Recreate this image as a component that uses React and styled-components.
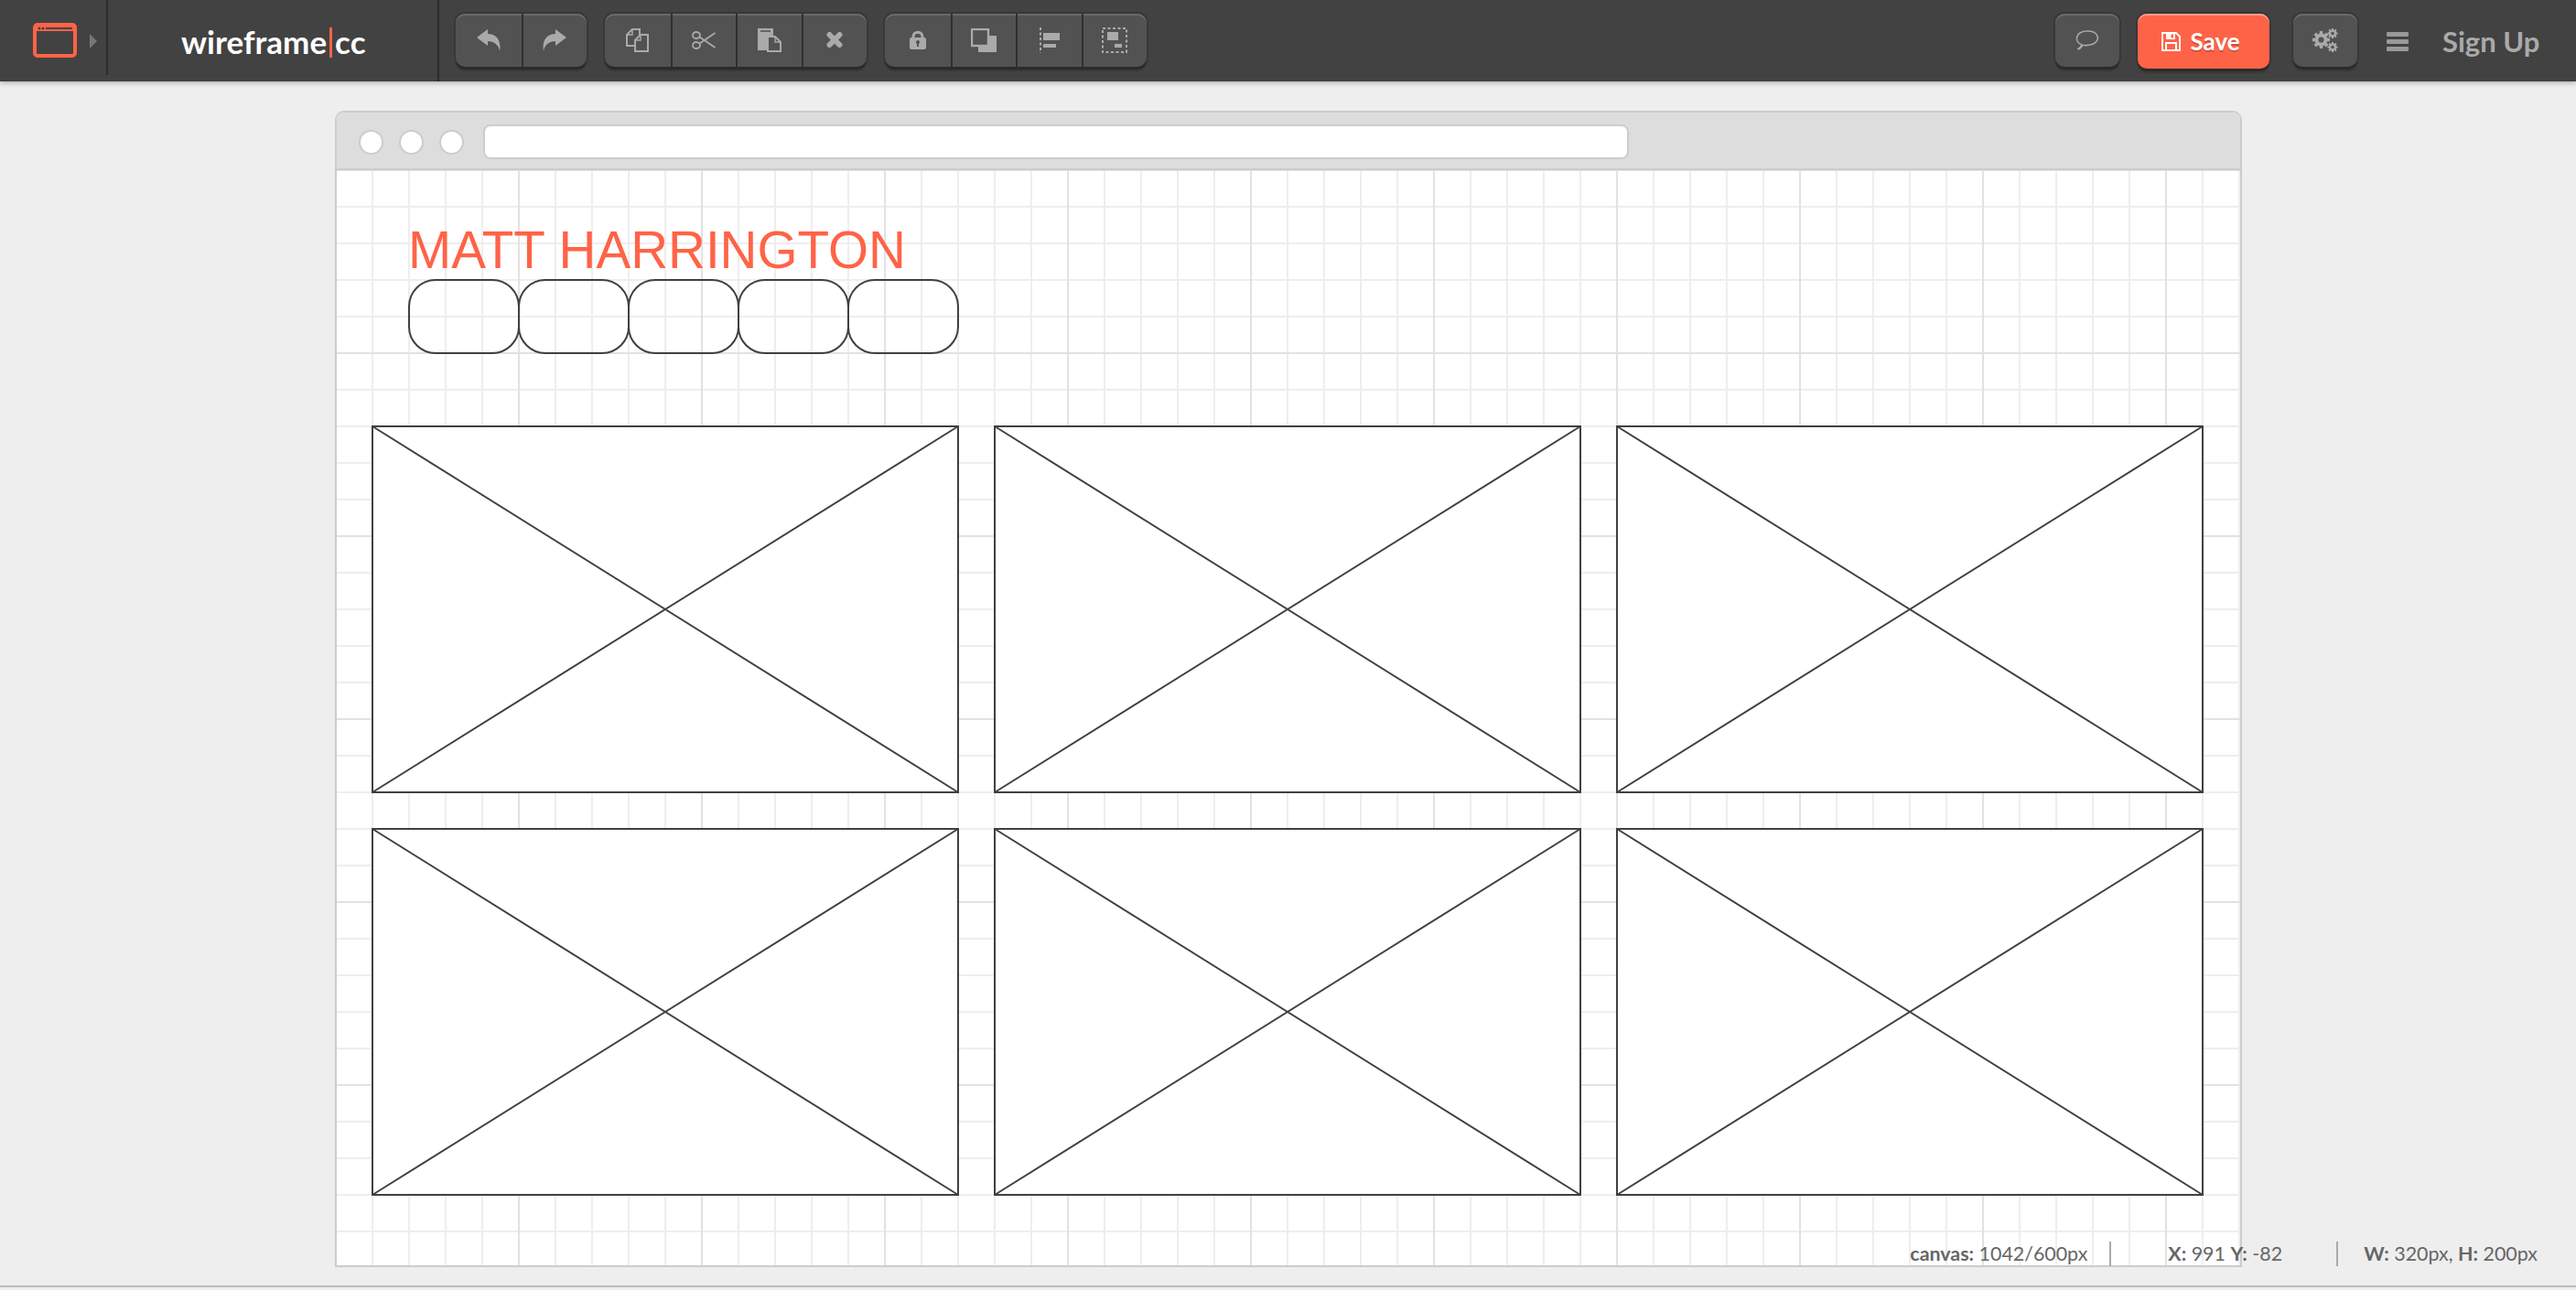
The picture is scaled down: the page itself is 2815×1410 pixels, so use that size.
import React from 'react';
import styled, { createGlobalStyle } from 'styled-components';

const ACCENT = '#ff6347';
const ICON = '#aaaaaa';
const BTN = '#525252';
const LINE = '#404040';

const GlobalStyle = createGlobalStyle`
  html, body {
    margin: 0;
    padding: 0;
    background: #eeeeee;
    font-family: Lato, "Open Sans", sans-serif;
    overflow: hidden;
  }
`;

const Page = styled.div`
  position: relative;
  width: 2815px;
  height: 1410px;
  display: flex;
  flex-direction: column;
`;

const TopBar = styled.header`
  height: 89px;
  flex: none;
  display: flex;
  align-items: stretch;
  background: #424242;
  box-shadow: 0 2px 5px rgba(0, 0, 0, 0.25);
  z-index: 2;
`;

const LogoCell = styled.div`
  width: 118px;
  height: 82px;
  box-sizing: border-box;
  border-right: 2px solid #2b2b2b;
  padding: 25px 0 0 36px;
  display: flex;
  gap: 14px;
`;

const Arrow = styled.span`
  width: 0;
  height: 0;
  margin-top: 12px;
  border-left: 8px solid #777;
  border-top: 8px solid transparent;
  border-bottom: 8px solid transparent;
`;

const BrandCell = styled.div`
  width: 362px;
  box-sizing: border-box;
  border-right: 2px solid #2b2b2b;
  padding-left: 80px;
  display: flex;
  align-items: center;
  color: #fff;
  font-size: 35px;
  font-weight: 700;
`;

const BrandBar = styled.span`
  width: 3px;
  height: 33px;
  margin: 3px 3px 0 3px;
  background: ${ACCENT};
`;

const Tools = styled.div`
  flex: 1;
  display: flex;
  align-items: flex-start;
  padding: 15px 0 0 18px;
  gap: 20px;
`;

const Group = styled.div`
  display: flex;
  height: 58px;
  border-radius: 10px;
  background: ${BTN};
  box-shadow: inset 0 2px 0 #6a6a6a, 0 3px 0 #2b2b2b, 0 0 0 2px #383838, 0 5px 0 #383838;
`;

const ToolButton = styled.div`
  width: 71.5px;
  padding-bottom: 1px;
  display: flex;
  align-items: center;
  justify-content: center;
  box-sizing: border-box;
  & + & {
    border-left: 2px solid #2f2f2f;
  }
`;

const RightSide = styled.div`
  display: flex;
  align-items: flex-start;
  padding: 15px 40px 0 0;
`;

const SingleButton = styled(Group)`
  width: 70px;
  align-items: center;
  justify-content: center;
  margin-right: ${(p) => p.$after}px;
`;

const SaveButton = styled.div`
  width: 144px;
  height: 60px;
  margin-right: 26px;
  padding-right: 6px;
  box-sizing: border-box;
  border-radius: 10px;
  background: ${ACCENT};
  box-shadow: inset 0 2px 0 #ff9c88, 0 3px 0 #2b2b2b, 0 0 0 2px #383838, 0 5px 0 #383838;
  display: flex;
  align-items: center;
  justify-content: center;
  gap: 10px;
  color: #fff;
  font-size: 26px;
  font-weight: 700;
  text-shadow: 0 2px 0 rgba(0, 0, 0, 0.2);
`;

const Burger = styled.div`
  width: 24px;
  margin: 20px 37px 0 32px;
  display: flex;
  flex-direction: column;
  gap: 3px;
  span {
    height: 5px;
    background: #999;
    border-radius: 1px;
  }
`;

const SignUp = styled.div`
  color: ${ICON};
  font-size: 31px;
  font-weight: 700;
  line-height: 60px;
  width: 106px;
  white-space: nowrap;
`;

const Workspace = styled.main`
  flex: 1;
  display: flex;
  justify-content: flex-start;
  padding: 32px 0 0 366px;
  box-sizing: border-box;
`;

const Browser = styled.div`
  width: 2084px;
  height: 1264px;
  box-sizing: border-box;
  border: 2px solid #cccccc;
  border-radius: 10px 10px 0 0;
  background: #fff;
  display: flex;
  flex-direction: column;
  overflow: hidden;
`;

const BrowserBar = styled.div`
  height: 63px;
  flex: none;
  box-sizing: border-box;
  background: #dddddd;
  border-bottom: 2px solid #cccccc;
  display: flex;
  align-items: center;
  padding: 3px 0 0 24px;
`;

const Dot = styled.span`
  width: 27px;
  height: 27px;
  margin-right: 17px;
  box-sizing: border-box;
  border-radius: 50%;
  background: #fff;
  border: 2px solid #cccccc;
`;

const UrlBar = styled.span`
  width: 1252px;
  height: 38px;
  margin-left: 4px;
  box-sizing: border-box;
  border-radius: 8px;
  background: #fff;
  border: 2px solid #cccccc;
`;

const Canvas = styled.div`
  flex: 1;
  box-sizing: border-box;
  padding: 60px 0 0 38px;
  background-color: #fff;
  background-image:
    linear-gradient(to right, #e2e2e2 2px, transparent 2px),
    linear-gradient(to bottom, #e2e2e2 2px, transparent 2px),
    linear-gradient(to right, #eeeeee 2px, transparent 2px),
    linear-gradient(to bottom, #eeeeee 2px, transparent 2px);
  background-size: 200px 200px, 200px 200px, 40px 40px, 40px 40px;
  background-position: 198px 0, 0 199px, 38px 0, 0 39px;
`;

const Title = styled.div`
  margin-left: 40px;
  height: 59px;
  color: ${ACCENT};
  font-family: "Liberation Sans", Arial, sans-serif;
  font-size: 56.6px;
  line-height: 55px;
  white-space: nowrap;
`;

const TabRow = styled.div`
  display: flex;
  margin: 0 0 78px 40px;
`;

const Tab = styled.div`
  width: 122px;
  height: 82px;
  margin-right: -2px;
  box-sizing: border-box;
  border: 2px solid ${LINE};
  border-radius: 30px;
`;

const ImageGrid = styled.div`
  display: grid;
  grid-template-columns: repeat(3, 642px);
  grid-auto-rows: 402px;
  column-gap: 38px;
  row-gap: 38px;
`;

const Placeholder = styled.svg`
  display: block;
  width: 642px;
  height: 402px;
  background: #fff;
`;

const Status = styled.div`
  position: absolute;
  right: 42px;
  top: 1357px;
  height: 27px;
  display: flex;
  align-items: center;
  color: #666666;
  font-size: 21.4px;
  white-space: nowrap;
  b {
    font-weight: 700;
  }
`;

const StatusItem = styled.span`
  padding-left: ${(p) => p.$left || 0}px;
  padding-right: ${(p) => p.$right || 0}px;
  line-height: 27px;
  & + & {
    border-left: 2px solid #aaaaaa;
  }
`;

const FootLine = styled.div`
  position: absolute;
  left: 0;
  right: 0;
  top: 1405px;
  height: 2px;
  background: #bbbbbb;
`;

const Icon = ({ w = 32, h = 32, children }) => (
  <svg width={w} height={h} viewBox={`0 0 ${w} ${h}`} fill="none">
    {children}
  </svg>
);

const Gear = ({ x, y, r, hole }) => {
  const teeth = [0, 45, 90, 135];
  return (
    <g transform={`translate(${x} ${y})`} fill={ICON}>
      {teeth.map((a) => (
        <rect key={a} x={-r * 0.26} y={-r * 1.38} width={r * 0.52} height={r * 2.76} transform={`rotate(${a})`} />
      ))}
      <circle r={r} />
      <circle r={hole} fill={BTN} />
    </g>
  );
};

const Doc = ({ x, y, w, h }) => (
  <g stroke={ICON} strokeWidth="2" fill={BTN}>
    <path d={`M${x + 1} ${y + h - 1} V${y + 7} L${x + 7} ${y + 1} H${x + w - 1} V${y + h - 1} Z`} />
    <path d={`M${x + 1} ${y + 7} H${x + 7} V${y + 1}`} fill="none" strokeWidth="1.4" />
  </g>
);

const icons = {
  undo: (
    <Icon w={26} h={24}>
      <path d="M0 9 L12 0 V5 C22 5 27 13 25 24 C24 17 19 13 12 13 V18 Z" fill={ICON} />
    </Icon>
  ),
  redo: (
    <Icon w={26} h={24}>
      <path d="M26 9 L14 0 V5 C4 5 -1 13 1 24 C2 17 7 13 14 13 V18 Z" fill={ICON} />
    </Icon>
  ),
  copy: (
    <Icon w={25} h={26}>
      <Doc x={0} y={0} w={16} h={20} />
      <Doc x={9} y={6} w={16} h={20} />
    </Icon>
  ),
  cut: (
    <Icon w={26} h={20}>
      <g stroke={ICON} strokeWidth="1.8">
        <ellipse cx="5" cy="4.5" rx="4" ry="3.5" />
        <ellipse cx="5" cy="15.5" rx="4" ry="3.5" />
        <path d="M8.5 6.5 L25.5 18 L13 9.5 M8.5 13.5 L25.5 2 L13 10.5" />
      </g>
    </Icon>
  ),
  paste: (
    <Icon w={26} h={26}>
      <path d="M0 0 H17 V8 H10 V24 H0 Z" fill={ICON} />
      <path d="M3 3 H14" stroke={BTN} strokeWidth="1.6" />
      <path d="M11 9 H19 L25 15 V25 H11 Z" fill={BTN} stroke={ICON} strokeWidth="2" />
      <path d="M19 9 V15 H25" stroke={ICON} strokeWidth="1.4" />
    </Icon>
  ),
  close: (
    <Icon w={18} h={17}>
      <path d="M3.5 3 L14.5 14 M14.5 3 L3.5 14" stroke={ICON} strokeWidth="6" strokeLinecap="round" />
    </Icon>
  ),
  lock: (
    <Icon w={18} h={21}>
      <path d="M4 9 V7 C4 0.5 14 0.5 14 7 V9" stroke={ICON} strokeWidth="3" />
      <rect x="0" y="8" width="18" height="13" rx="2" fill={ICON} />
      <circle cx="9" cy="13" r="2" fill={BTN} />
      <path d="M9 13 V18" stroke={BTN} strokeWidth="2" />
    </Icon>
  ),
  layer: (
    <Icon w={28} h={26}>
      <rect x="8" y="8" width="20" height="18" fill={ICON} />
      <rect x="1" y="1" width="18" height="18" fill={BTN} stroke={ICON} strokeWidth="2.4" />
    </Icon>
  ),
  align: (
    <Icon w={22} h={28}>
      <path d="M1 0 V28" stroke={ICON} strokeWidth="2" strokeDasharray="3 2.5" />
      <rect x="4" y="6" width="18" height="8" fill={ICON} />
      <rect x="4" y="18" width="14" height="4" fill={ICON} />
    </Icon>
  ),
  group: (
    <Icon w={28} h={28}>
      <rect x="1" y="1" width="26" height="26" stroke={ICON} strokeWidth="2" strokeDasharray="3 2.5" />
      <rect x="6" y="5" width="12" height="9" fill={ICON} />
      <rect x="14" y="18" width="8" height="4" fill={ICON} />
    </Icon>
  ),
  comment: (
    <Icon w={26} h={22}>
      <path
        d="M7 16 C-2 12.5 0 1 13 1 C26 1 28 12 18 15.5 C14.5 16.7 10.5 16.8 7.5 16.2 C7 18 5.5 20 2.5 21 C4.5 19.5 6.5 18 7 16 Z"
        stroke={ICON}
        strokeWidth="1.6"
      />
    </Icon>
  ),
  gears: (
    <Icon w={28} h={26}>
      <Gear x={9.5} y={12.5} r={6.9} hole={3.1} />
      <Gear x={22} y={5.5} r={4} hole={1.8} />
      <Gear x={22} y={20.5} r={4} hole={1.8} />
    </Icon>
  ),
};

const Floppy = () => (
  <Icon w={21} h={21}>
    <path d="M1 1 H16 L20 5 V20 H1 Z" stroke="#fff" strokeWidth="2" />
    <path d="M5 1 H15 V8 H5 Z" fill="#fff" />
    <rect x="10.5" y="2.5" width="2.5" height="4" fill={ACCENT} />
    <rect x="5" y="12" width="11" height="8" stroke="#fff" strokeWidth="2" />
  </Icon>
);

const LogoIcon = () => (
  <Icon w={48} h={38}>
    <rect x="2" y="2" width="44" height="34" rx="3" stroke={ACCENT} strokeWidth="4" />
    <rect x="2" y="2" width="44" height="7" fill={ACCENT} />
    <circle cx="7" cy="6" r="1.5" fill="#424242" />
    <circle cx="11" cy="6" r="1.5" fill="#424242" />
    <rect x="14" y="5" width="29" height="2" fill="#424242" />
  </Icon>
);

const groups = [
  ['undo', 'redo'],
  ['copy', 'cut', 'paste', 'close'],
  ['lock', 'layer', 'align', 'group'],
];

const placeholders = [0, 1, 2, 3, 4, 5];

export default function App() {
  return (
    <Page>
      <GlobalStyle />
      <TopBar>
        <LogoCell>
          <LogoIcon />
          <Arrow />
        </LogoCell>
        <BrandCell>
          wireframe<BrandBar />cc
        </BrandCell>
        <Tools>
          {groups.map((group) => (
            <Group key={group[0]}>
              {group.map((name) => (
                <ToolButton key={name}>{icons[name]}</ToolButton>
              ))}
            </Group>
          ))}
        </Tools>
        <RightSide>
          <SingleButton $after={20}>{icons.comment}</SingleButton>
          <SaveButton>
            <Floppy />
            Save
          </SaveButton>
          <SingleButton $after={0}>{icons.gears}</SingleButton>
          <Burger>
            <span />
            <span />
            <span />
          </Burger>
          <SignUp>Sign Up</SignUp>
        </RightSide>
      </TopBar>

      <Workspace>
        <Browser>
          <BrowserBar>
            <Dot />
            <Dot />
            <Dot />
            <UrlBar />
          </BrowserBar>
          <Canvas>
            <Title>MATT HARRINGTON</Title>
            <TabRow>
              {[0, 1, 2, 3, 4].map((i) => (
                <Tab key={i} />
              ))}
            </TabRow>
            <ImageGrid>
              {placeholders.map((i) => (
                <Placeholder key={i} viewBox="0 0 642 402">
                  <rect x="1" y="1" width="640" height="400" fill="#fff" stroke={LINE} strokeWidth="2" />
                  <path d="M1 1 L641 401 M641 1 L1 401" stroke={LINE} strokeWidth="2" />
                </Placeholder>
              ))}
            </ImageGrid>
          </Canvas>
        </Browser>
      </Workspace>

      <Status>
        <StatusItem $right={24}>
          <b>canvas:</b> 1042/600px
        </StatusItem>
        <StatusItem $left={62} $right={59}>
          <b>X:</b> 991 <b>Y:</b> -82
        </StatusItem>
        <StatusItem $left={28}>
          <b>W:</b> 320px, <b>H:</b> 200px
        </StatusItem>
      </Status>
      <FootLine />
    </Page>
  );
}
